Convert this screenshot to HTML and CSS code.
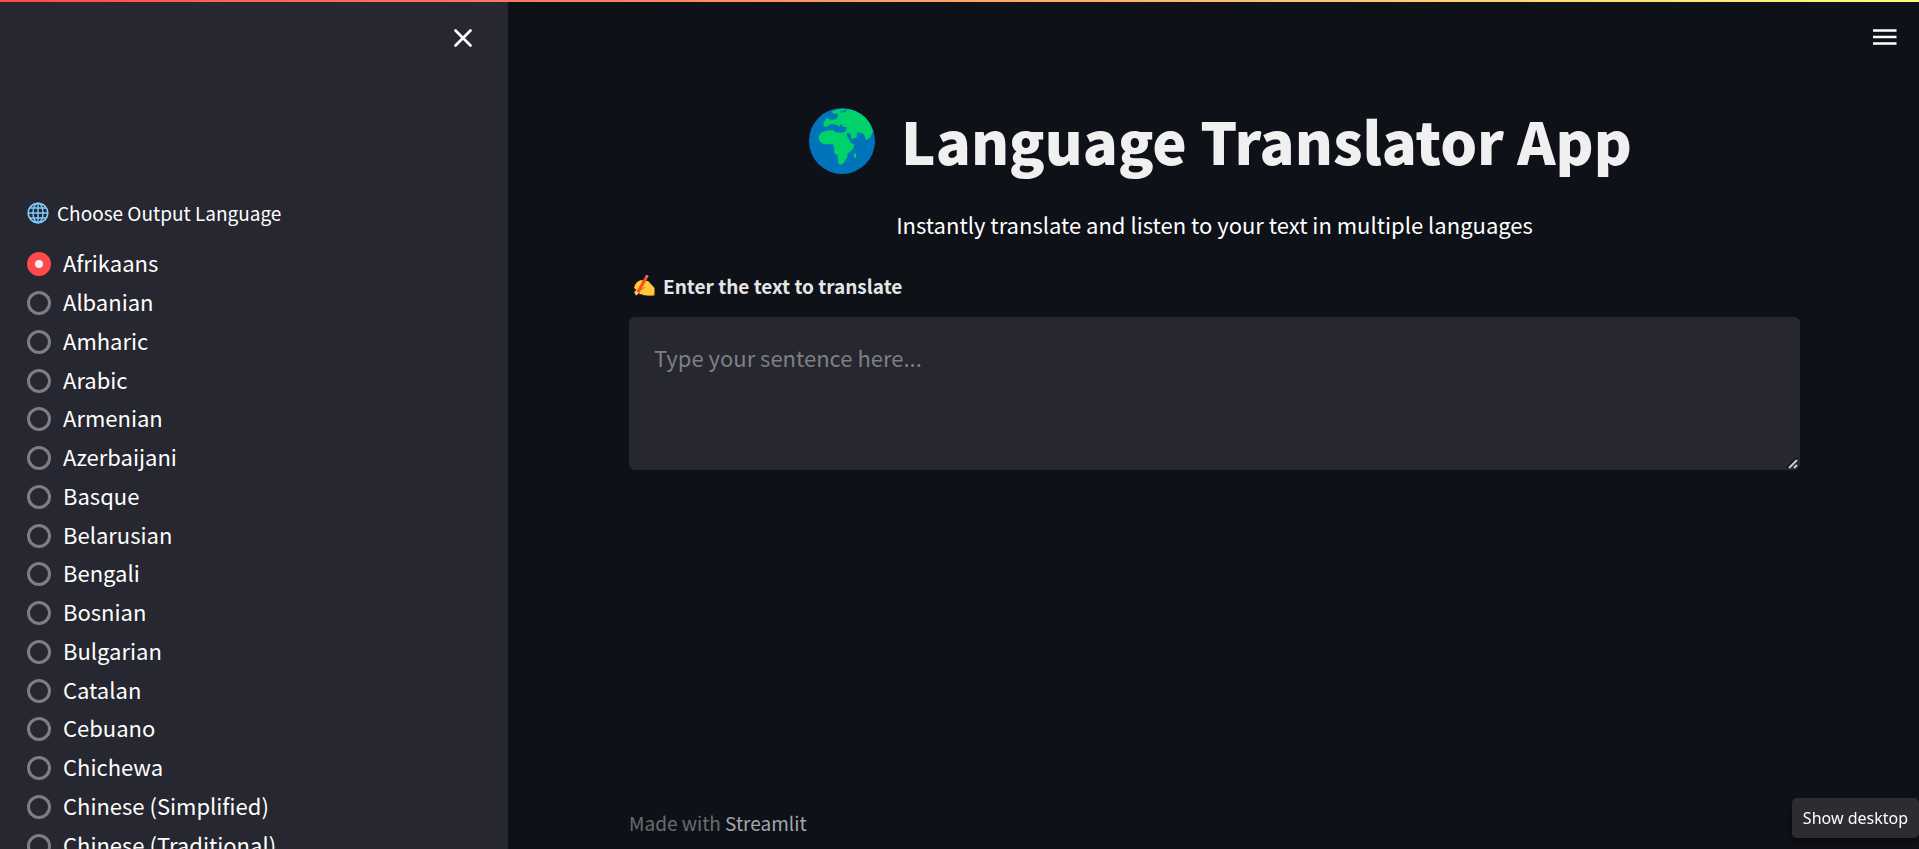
FILE: index.html
```html
<!DOCTYPE html>
<html lang="en">
<head>
<meta charset="utf-8">
<title>Language Translator App</title>
<meta name="viewport" content="width=device-width, initial-scale=1">
<link rel="stylesheet" href="styles.css">
</head>
<body>
<div class="decoration"></div>
<div class="app">
  <aside class="sidebar">
    <button class="icon-button sidebar-close" type="button" aria-label="Close sidebar">
      <svg viewBox="0 0 24 24" width="24" height="24" aria-hidden="true"><path d="M4.500 4.500l15 15M19.500 4.500l-15 15" fill="none" stroke="#fff" stroke-width="2.7" stroke-linecap="round"/></svg>
    </button>
    <fieldset class="languages">
      <legend class="languages-title">
        <svg class="globe" viewBox="0 0 22 22" width="22" height="22" aria-hidden="true"><g fill="none" stroke="#83cbff" stroke-width="1.4"><circle cx="11" cy="11" r="9.8" stroke-width="1.6"/><ellipse cx="11" cy="11" rx="5" ry="9.8"/><path d="M11 1v20M1 11h20M3 6h16M3 16h16"/></g></svg>
        Choose Output Language
      </legend>
      <div class="options">
        <label class="option"><input type="radio" name="language" checked>Afrikaans</label>
        <label class="option"><input type="radio" name="language">Albanian</label>
        <label class="option"><input type="radio" name="language">Amharic</label>
        <label class="option"><input type="radio" name="language">Arabic</label>
        <label class="option"><input type="radio" name="language">Armenian</label>
        <label class="option"><input type="radio" name="language">Azerbaijani</label>
        <label class="option"><input type="radio" name="language">Basque</label>
        <label class="option"><input type="radio" name="language">Belarusian</label>
        <label class="option"><input type="radio" name="language">Bengali</label>
        <label class="option"><input type="radio" name="language">Bosnian</label>
        <label class="option"><input type="radio" name="language">Bulgarian</label>
        <label class="option"><input type="radio" name="language">Catalan</label>
        <label class="option"><input type="radio" name="language">Cebuano</label>
        <label class="option"><input type="radio" name="language">Chichewa</label>
        <label class="option"><input type="radio" name="language">Chinese (Simplified)</label>
        <label class="option"><input type="radio" name="language">Chinese (Traditional)</label>
      </div>
    </fieldset>
  </aside>
  <main class="main">
    <header class="toolbar">
      <button class="icon-button" type="button" aria-label="Main menu">
        <svg viewBox="0 0 24 18" width="24" height="18" aria-hidden="true"><path d="M0 2.500h23.500M0 9h23.500M0 15.500h23.500" stroke="#fff" stroke-width="2.5"/></svg>
      </button>
    </header>
    <div class="content">
      <h1 class="title">
        <svg class="earth" viewBox="9 9 198 198" width="66" height="66" aria-hidden="true">
          <circle cx="108" cy="108" r="99" fill="#0074ba"/>
          <path fill="#00d26a" d="M78 19Q92 12 108 12L130 13Q150 17 168 29 192 46 201 79L193 97Q186 106 180 104 178 101 176 92 172 84 166 84L156 82 150 86Q156 92 150 98L139 102Q132 98 136 93L130 84H123Q121 90 125 97 130 103 132 110 135 117 144 116 146 124 138 136 126 144 124 149 126 155 118 165 114 178 104 179 96 180 97 170L94 149Q86 149 85 141L84 128Q84 119 79 117 70 119 52 117 38 110 38 98 39 85 51 81 60 75 76 76 82 74 86 80 91 83 101 82 112 86 118 79L120 74 122 67Q117 64 112 66L106 57Q101 59 101 64L97 66Q95 57 88 60L80 57Q70 57 66 63 60 68 54 64 50 57 55 48 60 48 60 39 63 36 66 42 74 45 82 44L91 41Q96 35 95 26 90 23 86 28L80 25Z"/>
          <path d="M74 36Q82 39 89 34" fill="none" stroke="#0074ba" stroke-width="5"/>
          <path d="M104 20Q114 22 121 15" fill="none" stroke="#0074ba" stroke-width="5"/>
          <ellipse cx="147" cy="152" rx="4" ry="7" fill="#00d26a"/>
        </svg>
        Language Translator App
      </h1>
      <p class="subtitle">Instantly translate and listen to your text in multiple languages</p>
      <div class="field">
        <label class="field-label" for="sentence">
          <svg viewBox="0 0 22 22" width="22" height="22" aria-hidden="true"><path fill="#ffc83d" d="M1 13Q2 7 8 5l4 1q3-1 5 2l4.500 5v7q-5 1-9 0-2 1-4-1-3 1-2-1l-4 1q-3-2 1-4z"/><path d="M12 20q5 1 9.500-1v1.500q-4 1-9 0z" fill="#d67d00"/><path d="M13.500 2L4.500 18" stroke="#f4511e" stroke-width="3"/><path d="M14.500 .5l-1 1.500" stroke="#ff8687" stroke-width="3"/><path d="M4.500 17l-1.500 3" stroke="#ffceb0" stroke-width="2"/><path d="M8 15l4-3" stroke="#d67d00"/></svg>
          Enter the text to translate
        </label>
        <textarea class="sentence" id="sentence" placeholder="Type your sentence here..."></textarea>
      </div>
    </div>
    <footer class="footer">Made with <a href="#">Streamlit</a></footer>
  </main>
</div>
<div class="tooltip" role="tooltip">Show desktop</div>
</body>
</html>
```
FILE: styles.css
```css
* { box-sizing: border-box; }

body {
  margin: 0;
  color-scheme: dark;
  background: #0e1117;
  color: #fff;
  font-family: "Noto Sans CJK SC", "Noto Sans", sans-serif;
  font-size: 22px;
}

.decoration {
  position: fixed;
  inset: 0 0 auto;
  z-index: 2;
  height: 2px;
  background: linear-gradient(90deg, #ff4b4b, #fffd80);
}

.app {
  display: flex;
  height: 100vh;
  overflow: hidden;
}

.icon-button {
  display: flex;
  padding: 0;
  border: 0;
  background: none;
  cursor: pointer;
}

.sidebar {
  display: flex;
  flex: 0 0 508px;
  flex-direction: column;
  padding: 26px 27px 0;
  overflow: hidden;
  background: #262730;
}

.sidebar-close {
  align-self: flex-end;
  margin-right: 6px;
}

.languages {
  min-width: 0;
  margin: 147px 0 0;
  padding: 0;
  border: 0;
}

.languages-title {
  display: flex;
  align-items: center;
  gap: 8px;
  padding: 0;
  font-size: 19px;
  line-height: 32px;
}

.options {
  display: grid;
  grid-template-rows: repeat(16, 1fr);
  height: 620px;
  margin-top: 14px;
}

.option {
  display: flex;
  align-items: center;
  gap: 12px;
  line-height: 38px;
}

.option input {
  appearance: none;
  width: 24px;
  height: 24px;
  margin: 4px 0 0;
  border: 3px solid #7d7d83;
  border-radius: 50%;
}

.option input:checked {
  border: 8px solid #ff4b4b;
  background: #f0f2f6;
}

.main {
  display: flex;
  flex: 1;
  flex-direction: column;
  min-width: 0;
}

.toolbar {
  display: flex;
  justify-content: flex-end;
  padding: 28px 22px 0;
}

.content {
  flex: 1;
  padding: 52px 119px 0 121px;
}

.title {
  display: flex;
  align-items: center;
  justify-content: center;
  gap: 26px;
  margin: 0;
  padding-left: 12px;
  color: #f0f0f0;
  font-size: 58px;
  font-weight: 900;
  line-height: 84px;
}

.earth { margin-top: 2px; }

.subtitle {
  margin: 24px 0 0;
  line-height: 36px;
  text-align: center;
}

.field {
  display: flex;
  flex-direction: column;
  gap: 15px;
  margin-top: 28px;
}

.field-label {
  display: flex;
  align-items: center;
  gap: 8px;
  padding-left: 4px;
  color: #e6e6e6;
  font-size: 19px;
  font-weight: 700;
  line-height: 32px;
}

.sentence {
  width: 100%;
  height: 153px;
  padding: 22px 25px;
  border: 0;
  border-radius: 6px;
  background: #262730;
  color: #fafafa;
  font: inherit;
  line-height: 36px;
  resize: vertical;
}

.sentence::placeholder { color: #7f7f84; }

.sentence::-webkit-resizer {
  background: url("data:image/svg+xml,%3Csvg xmlns='http://www.w3.org/2000/svg' width='15' height='15'%3E%3Cpath d='M2 13L12 3' stroke='%23111' stroke-width='2'/%3E%3Cpath d='M4 13L12 5M9 13L12 10' stroke='%23ccc' stroke-width='2'/%3E%3C/svg%3E") right bottom no-repeat;
}

.footer {
  padding: 0 121px 10px;
  color: #6b6c70;
  font-size: 19px;
  line-height: 32px;
}

.footer a {
  color: #a5a6a9;
  text-decoration: none;
}

.tooltip {
  position: fixed;
  right: 0;
  bottom: 11px;
  padding: 8px 11px;
  border-radius: 5px;
  background: #2c2c31;
  box-shadow: 0 4px 10px rgba(0, 0, 0, 0.4);
  color: #fff;
  font-family: "Noto Sans", sans-serif;
  font-size: 16px;
  line-height: 24px;
}
```
